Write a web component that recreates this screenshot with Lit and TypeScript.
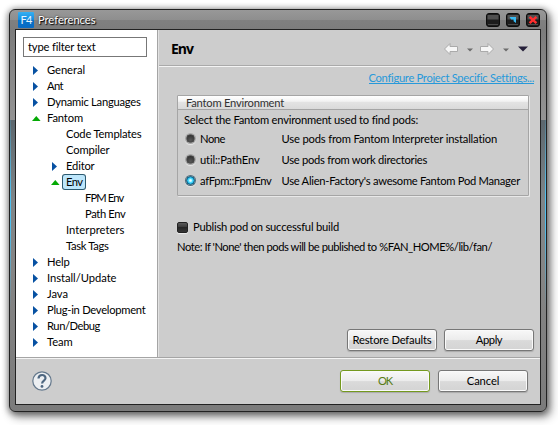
import { LitElement, html, css, svg } from "lit";
import { customElement, property, state } from "lit/decorators.js";
import { classMap } from "lit/directives/class-map.js";

/** A single-line label whose tracking is adjusted to a given width. */
@customElement("fit-label")
class FitLabel extends LitElement {
  @property() text = "";
  @property({ type: Number }) w = 0;
  @state() spacing = 0;
  static styles = css`
    :host { display: inline-block; white-space: pre; }
    span { display: inline-block; font-variant-ligatures: none; }
  `;
  firstUpdated() {
    const span = this.renderRoot.querySelector("span")!;
    const natural = span.getBoundingClientRect().width;
    if (this.w) this.spacing = (this.w - natural) / this.text.length;
  }
  render() {
    return html`<span style="letter-spacing:${this.spacing}px">${this.text}</span>`;
  }
}

type Row = { t: string; w: number; level: number; state?: "open" | "closed"; sel?: boolean };

const ROWS: Row[] = [
  { t: "General", w: 38, level: 0, state: "closed" },
  { t: "Ant", w: 16, level: 0, state: "closed" },
  { t: "Dynamic Languages", w: 93.5, level: 0, state: "closed" },
  { t: "Fantom", w: 36, level: 0, state: "open" },
  { t: "Code Templates", w: 75.5, level: 1 },
  { t: "Compiler", w: 43.5, level: 1 },
  { t: "Editor", w: 28.5, level: 1, state: "closed" },
  { t: "Env", w: 16.5, level: 1, state: "open", sel: true },
  { t: "FPM Env", w: 38.5, level: 2 },
  { t: "Path Env", w: 40.5, level: 2 },
  { t: "Interpreters", w: 58.5, level: 1 },
  { t: "Task Tags", w: 42.5, level: 1 },
  { t: "Help", w: 22.5, level: 0, state: "closed" },
  { t: "Install/Update", w: 69.5, level: 0, state: "closed" },
  { t: "Java", w: 21, level: 0, state: "closed" },
  { t: "Plug-in Development", w: 98.5, level: 0, state: "closed" },
  { t: "Run/Debug", w: 53, level: 0, state: "closed" },
  { t: "Team", w: 25.5, level: 0, state: "closed" },
];

const OPTIONS = [
  { name: "None", w: 25, desc: "Use pods from Fantom Interpreter installation", dw: 215.5, on: false },
  { name: "util::PathEnv", w: 59.5, desc: "Use pods from work directories", dw: 145.5, on: false },
  { name: "afFpm::FpmEnv", w: 71.5, desc: "Use Alien-Factory's awesome Fantom Pod Manager", dw: 238.5, on: true },
];

const label = (t: string, w: number) => html`<fit-label .text=${t} .w=${w}></fit-label>`;

@customElement("app-root")
class AppRoot extends LitElement {
  static styles = css`
    :host {
      display: block; box-sizing: border-box; width: 558px; height: 425px;
      padding: 9px 0 0 9px; background: #fff; overflow: hidden; color: #000;
      font: 11.2px/16px Lato, "Open Sans", sans-serif;
    }
    * { box-sizing: border-box; }
    svg { display: block; flex: none; }
    .window {
      display: grid; grid-template-rows: 19px 376px; width: 538px; height: 403px;
      padding: 0 5px 6px; border: 1px solid #222; border-radius: 6px;
      background: linear-gradient(#989898, #8e8e8e 10px, #808080 10px, #7c7c7c 20px, #949494 110px, #5c676e 110px, #7f8588 190px, #858585 260px, #7b7b7b);
      box-shadow: 0 1px 6px 1px rgba(0,0,0,.4), 3px 4px 10px 1px rgba(0,0,0,.42);
      position: relative;
    }
    .glow { position: absolute; top: 110px; width: 1px; height: 190px;
      background: linear-gradient(rgba(79,190,235,.2), #4fc0ef 40%, #4fc0ef 55%, rgba(79,190,235,0)); }
    .glow.left { left: 0; }
    .glow.right { right: 0; }
    .title { display: flex; align-items: center; padding: 0 1px 0 3px; color: #fff;
      text-shadow: 1px 1px 1px #000, 0 0 2px #222; }
    .logo { width: 16px; height: 16px; margin-right: 4px; border-radius: 1px; text-align: center;
      font: 11px/15px Lato, sans-serif; text-shadow: none; color: #e8f6ff;
      background: linear-gradient(#35b0f2, #118bdf 50%, #0572c9 52%, #0b6bc4); }
    .name { flex: 1; padding-top: 1px; }
    .controls { display: flex; gap: 6px; }
    .content { display: grid; grid-template-rows: 327px 47px; border: 1px solid #222; background: #cdcdcd; }
    .main { display: grid; grid-template-columns: 142px 1fr; }
    .side { background: #fff; border-right: 1px solid #a5a5a5; padding: 7px 0 0 7px; }
    .filter { width: 124px; height: 20px; border: 1px solid #777; padding: 1px 0 0 4px; }
    .tree { margin: 5px 0 0 9px; }
    .row { display: flex; align-items: center; height: 16px; }
    .row.l1 { padding-left: 19px; }
    .row.l2 { padding-left: 38px; }
    .twist { width: 12px; height: 16px; }
    .cell { height: 16px; padding: 0 3px; line-height: 16px; }
    .sel { border-radius: 2px; background: #bde6fb; box-shadow: 0 0 0 1px #2c5a70; line-height: 14px; height: 14px; width: 22px; }
    .page { display: grid; grid-template-rows: 37px 1fr; border-left: 1px solid #e2e2e2; }
    .head { display: flex; align-items: center; border-bottom: 1px solid #f4f4f4; box-shadow: inset 0 -1px #aaa;
      padding: 1px 11px 0 12px; }
    h1 { flex: 1; margin: 0; font: bold 14px/18px "Open Sans", sans-serif; }
    .body { display: flex; flex-direction: column; padding: 4px 11px 6px 18px; }
    .link { align-self: flex-end; margin-right: -5px; color: #2799da; border-bottom: 1px solid #2799da; line-height: 14px; height: 13px; }
    .link fit-label { vertical-align: top; }
    .group { width: 352px; height: 101px; margin-top: 11px; border: 1px solid #a5a5a5; border-radius: 1px;
      box-shadow: 1px 1px #e8e8e8; }
    .caption { height: 14px; padding-left: 8px; color: #333; line-height: 13px; border-bottom: 1px solid #a5a5a5;
      background: linear-gradient(#fff, #f3f3f3 40%, #e3e3e3 50%, #dadada); }
    .intro { padding: 2px 0 0 6px; }
    .option { display: grid; grid-template-columns: 14px 81.5px 1fr; height: 21px; align-items: center; padding-left: 8px; }
    .radio { width: 9px; height: 9px; border-radius: 50%; border: 1px solid #4e4e4e;
      background: radial-gradient(circle at 50% 75%, #585858, #292929); box-shadow: 0 0 0 1px #a6a6a6, 0 1px 1px 1px #e8e8e8; }
    .radio.on { border-color: #075578; background: radial-gradient(circle, #e6ffff 0 15%, #4fdcff 40%, #0692ca 85%); box-shadow: 0 0 0 1px #4d6c7b, 0 1px 1px 1px #e8e8e8; }
    .check { display: flex; align-items: center; margin-top: 23px; gap: 5px; }
    .box { width: 11px; height: 11px; border-radius: 2px; border: 1px solid #222; box-shadow: 0 1px 1px #eee;
      background: linear-gradient(#5a5a5a, #393939 45%, #252525 50%, #363636); }
    .note { margin-top: 4px; }
    .actions { display: flex; justify-content: flex-end; gap: 7px; margin-top: auto; margin-right: -5px; }
    .btn { display: flex; justify-content: center; align-items: center; width: 90px; height: 22px;
      border: 1px solid #777; border-radius: 3px; box-shadow: 0 1px 1px #aaa, inset 0 0 0 1px #fafafa;
      background: linear-gradient(#f8f8f8, #ececec 48%, #dadada 53%, #d4d4d4); }
    .ok { border-color: #74991f; color: #587c15; margin-right: 8px; }
    .foot { display: flex; align-items: center; padding: 0 12px 0 16px; border-top: 1px solid #a5a5a5; box-shadow: inset 0 1px #f4f4f4; }
    .gap { flex: 1; }
  `;

  twist(r: Row) {
    if (r.state === "closed") return svg`<path d="M1 4v9l5-4.5z" fill="#0751a2"/>`;
    if (r.state === "open") return svg`<path d="M0 11L4.3 6 8.6 11z" fill="#04a904"/>`;
    return svg``;
  }

  control(kind: string) {
    return html`<svg width="14" height="14" viewBox="0 0 14 14">
      <rect x=".5" y=".5" width="13" height="13" rx="2.5" fill="#1c1c1c" stroke="#0c0c0c"/>
      <path d="M1.5 2h11V6.5h-11z" fill="#505050"/>
      <path d="M2 11.5h10" stroke="#4a4a4a"/>
      ${kind === "max" ? svg`<path d="M3.5 4H10V10L7.6 8.2V6.4H5.2z" fill="#38baf2"/>` : ""}
      ${kind === "close" ? svg`<path d="M3.6 3.8L10.4 10.2M10.4 3.8L3.6 10.2" stroke="#ff2e2e" stroke-width="2.5"/>` : ""}
    </svg>`;
  }

  render() {
    return html`<div class="window">
      <i class="glow left"></i><i class="glow right"></i>
      <div class="title">
        <div class="logo">${label("F4", 11)}</div>
        <div class="name">${label("Preferences", 57.5)}</div>
        <div class="controls">${["min", "max", "close"].map((k) => this.control(k))}</div>
      </div>
      <div class="content">
        <div class="main">
          <div class="side">
            <div class="filter">${label("type filter text", 67.5)}</div>
            <div class="tree">${ROWS.map((r) => html`
              <div class="row l${r.level}">
                <svg class="twist" viewBox="0 0 12 16">${this.twist(r)}</svg>
                <div class=${classMap({ cell: true, sel: !!r.sel })}>${label(r.t, r.w)}</div>
              </div>`)}</div>
          </div>
          <div class="page">
            <div class="head">
              <h1>${label("Env", 22)}</h1>
              <svg width="86" height="14" viewBox="0 0 86 14">
                <g fill="#f6f6f6" stroke="#aaa" stroke-linejoin="round">
                  <path d="M1.5 7L7 1.5V4.5H14.5V9.5H7V12.5z"/>
                  <path d="M50.5 7L45 1.5V4.5H37.5V9.5H45V12.5z"/>
                </g>
                <path d="M24 6.5h6L27 9.5zM60 6.5h6L63 9.5z" fill="#6c6c6c"/>
                <path d="M75 4.5h10L80 9.5z" fill="#26203a"/>
              </svg>
            </div>
            <div class="body">
              <div class="link">${label("Configure Project Specific Settings...", 165.5)}</div>
              <div class="group">
                <div class="caption">${label("Fantom Environment", 98)}</div>
                <div class="intro">${label("Select the Fantom environment used to find pods:", 234)}</div>
                ${OPTIONS.map((o) => html`<div class="option">
                  <i class=${classMap({ radio: true, on: o.on })}></i>
                  ${label(o.name, o.w)}${label(o.desc, o.dw)}
                </div>`)}
              </div>
              <div class="check"><i class="box"></i>${label("Publish pod on successful build", 146)}</div>
              <div class="note">${label("Note: If 'None' then pods will be published to %FAN_HOME%/lib/fan/", 315)}</div>
              <div class="actions">
                <div class="btn">${label("Restore Defaults", 79)}</div>
                <div class="btn">${label("Apply", 26.5)}</div>
              </div>
            </div>
          </div>
        </div>
        <div class="foot">
          <svg width="20" height="20" viewBox="0 0 20 20">
            <circle cx="10" cy="10" r="9.2" fill="#eceff2" stroke="#64788c" stroke-width="1.2"/>
            <path d="M6.5 7.6C6.6 2.7 13.7 3 13.5 7.3C13.4 9.7 10.2 9.6 10.1 12.5" fill="none" stroke="#4d6680" stroke-width="2.2"/>
            <circle cx="10" cy="15.4" r="1.4" fill="#4d6680"/>
          </svg>
          <div class="gap"></div>
          <div class="btn ok">${label("OK", 14)}</div>
          <div class="btn">${label("Cancel", 32.5)}</div>
        </div>
      </div>
    </div>`;
  }
}
